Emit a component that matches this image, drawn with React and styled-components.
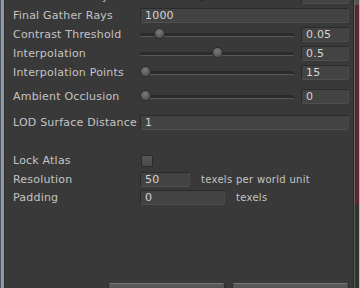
import styled, { createGlobalStyle } from 'styled-components'

const GlobalStyle = createGlobalStyle`
    html, body {
        margin: 0;
        padding: 0;
        background: #393939;
    }
`

const Page = styled.div`
    width: 360px;
    height: 288px;
    display: flex;
    overflow: hidden;
    background-color: #393939;
    background-image: repeating-conic-gradient(#3b3b3b 0 25%, #373737 0 50%);
    background-size: 2px 2px;
    font-family: "DejaVu Sans", Verdana, sans-serif;
    font-size: 11px;
    letter-spacing: 0.2px;
    color: #c4c4c4;
`

const EdgeStrip = styled.div`
    width: 3px;
    flex: none;
    border-left: 1px solid #4d535a;
    border-right: 1px solid #2b2b2b;
    background: #8f9aa6;
`

const Content = styled.div`
    flex: 1;
    display: flex;
    flex-direction: column;
    margin-top: -13px;
    padding: 0 4px 0 8px;
    min-width: 0;
`

const Row = styled.div`
    display: flex;
    align-items: center;
    height: ${({h}) => h || 19}px;
    margin-top: ${({gap}) => gap || 0}px;
    flex: none;
`

const Label = styled.div`
    width: 127px;
    flex: none;
    white-space: nowrap;
`

const Field = styled.div`
    box-sizing: border-box;
    height: 15px;
    width: ${({w}) => w ? w + 'px' : 'auto'};
    flex: ${({w}) => w ? 'none' : 1};
    padding: 0 4px;
    line-height: 14px;
    color: #d4d4d4;
    background: #434343;
    border: 1px solid #2a2a2a;
    border-bottom-color: #4f4f4f;
    border-right-color: #4a4a4a;
    border-radius: 2px;
    white-space: nowrap;
`

const SliderTrack = styled.div`
    position: relative;
    flex: 1;
    height: 3px;
    margin-right: 7px;
    background: #2b2b2b;
    border-bottom: 1px solid #575757;
    border-radius: 1px;
`

const Thumb = styled.div`
    position: absolute;
    top: -5px;
    width: 11px;
    height: 11px;
    margin-left: -5px;
    box-sizing: border-box;
    border-radius: 50%;
    border: 1px solid #2c2c2c;
    background: radial-gradient(circle at 45% 35%, #7a7a7a, #555 70%);
`

const CheckBox = styled.div`
    width: 12px;
    height: 12px;
    box-sizing: border-box;
    margin-left: 1px;
    border-radius: 2px;
    border: 1px solid #2a2a2a;
    background: linear-gradient(#585858, #4a4a4a);
`

const Unit = styled.span`
    margin-left: 11px;
    font-size: 10px;
    letter-spacing: 0.3px;
    white-space: nowrap;
`

const Spacer = styled.div`
    flex: 1;
`

const ButtonBar = styled.div`
    display: flex;
    justify-content: flex-end;
    gap: 7px;
    margin-bottom: -13px;
    flex: none;
`

const Button = styled.div`
    box-sizing: border-box;
    width: 117px;
    height: 18px;
    display: flex;
    align-items: center;
    justify-content: center;
    padding-top: 4px;
    border: 1px solid #2d2d2d;
    border-top-color: #777;
    border-radius: 3px;
    background: linear-gradient(#5a5a5a, #4a4a4a);
    color: #d0d0d0;
`

const ScrollBar = styled.div`
    width: 7px;
    flex: none;
    display: flex;
    flex-direction: column;
    border-left: 1px solid #2a2a2a;
    border-right: 1px solid #b8b8b8;
    background: #2f3430;
    box-sizing: border-box;
`

const ScrollTop = styled.div`
    height: 5px;
    background: #555;
    border-left: 1px solid #666;
`

const ScrollThumb = styled.div`
    height: 200px;
    background: #5a2630;
    border-left: 1px solid #6a6a6a;
`

const ScrollRest = styled.div`
    flex: 1;
    border-left: 1px solid #5c605c;
`

function SliderRow({ label, value, fraction, gap }) {
    return (
        <Row gap={gap}>
            <Label>{label}</Label>
            <SliderTrack>
                <Thumb style={{ left: `calc(5px + (100% - 10px) * ${fraction})` }} />
            </SliderTrack>
            <Field w={48}>{value}</Field>
        </Row>
    )
}

function App() {
    return (
        <Page>
            <GlobalStyle />
            <EdgeStrip />
            <Content>
                <SliderRow label="Bounce Intensity" value="1" fraction={0.39} />
                <Row>
                    <Label>Final Gather Rays</Label>
                    <Field>1000</Field>
                </Row>
                <SliderRow label="Contrast Threshold" value="0.05" fraction={0.1} />
                <SliderRow label="Interpolation" value="0.5" fraction={0.5} />
                <SliderRow label="Interpolation Points" value="15" fraction={0} />
                <SliderRow label="Ambient Occlusion" value="0" fraction={0} gap={5} />
                <Row gap={7}>
                    <Label>LOD Surface Distance</Label>
                    <Field>1</Field>
                </Row>
                <Row gap={19}>
                    <Label>Lock Atlas</Label>
                    <CheckBox />
                </Row>
                <Row h={18}>
                    <Label>Resolution</Label>
                    <Field w={50}>50</Field>
                    <Unit>texels per world unit</Unit>
                </Row>
                <Row h={18}>
                    <Label>Padding</Label>
                    <Field w={85}>0</Field>
                    <Unit>texels</Unit>
                </Row>
                <Spacer />
                <ButtonBar>
                    <Button>Clear</Button>
                    <Button>Bake Scene</Button>
                </ButtonBar>
            </Content>
            <ScrollBar>
                <ScrollTop />
                <ScrollThumb />
                <ScrollRest />
            </ScrollBar>
        </Page>
    )
}

export default App
